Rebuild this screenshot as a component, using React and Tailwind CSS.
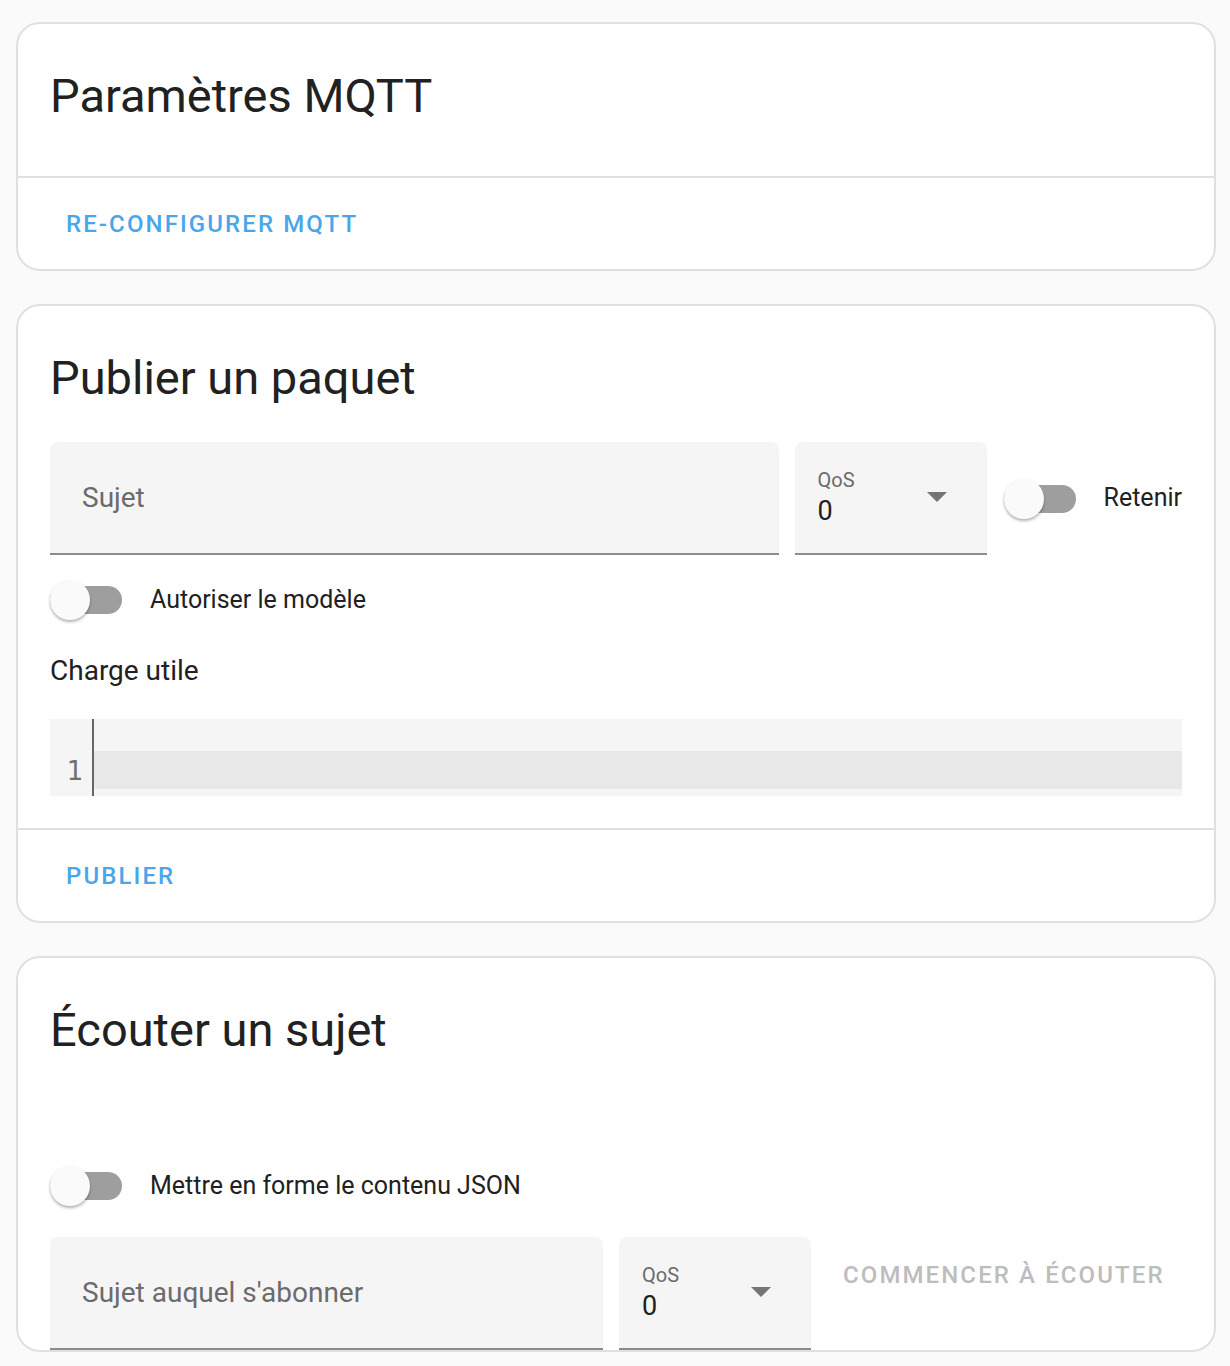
import React from "react";

function Toggle() {
  return (
    <div className="relative w-[72px] h-[40px] flex items-center shrink-0">
      <div className="w-[72px] h-[28px] rounded-full bg-[#9e9e9e]" />
      <div className="absolute left-0 top-0 w-[40px] h-[40px] rounded-full bg-[#fafafa] shadow-[0_2px_3px_rgba(0,0,0,0.3)]" />
    </div>
  );
}

function TextField({ label, className }) {
  return (
    <div className={`h-[113px] bg-[#f5f5f5] rounded-t-[8px] border-b-2 border-[#8c8c8c] flex items-center px-[32px] ${className}`}>
      <span className="text-[28px] text-[#6b6b6b]">{label}</span>
    </div>
  );
}

function QosSelect() {
  return (
    <div className="w-[192px] h-[113px] bg-[#f5f5f5] rounded-t-[8px] border-b-2 border-[#8c8c8c] flex items-center justify-between pl-[23px] pr-[40px] shrink-0">
      <div className="flex flex-col pt-[4px]">
        <span className="text-[20px] leading-[24px] text-[#6b6b6b] -mt-[3px]">QoS</span>
        <span className="text-[27px] leading-[34px] text-[#212121] mt-[2px]">0</span>
      </div>
      <svg width="20" height="10" viewBox="0 0 20 10" className="-mt-[2px]">
        <path d="M0 0 L20 0 L10 10 Z" fill="#757575" />
      </svg>
    </div>
  );
}

function Card({ children, className }) {
  return (
    <div className={`bg-white border-2 border-[#e0e0e0] rounded-[24px] ${className}`}>
      {children}
    </div>
  );
}

export default function App() {
  return (
    <div className="min-h-screen bg-[#fafafa] pt-[22px] pl-[16px] pr-[14px] font-['Roboto',sans-serif] text-[#212121]">
      <Card>
        <div className="h-[154px] flex items-center px-[32px] border-b-2 border-[#e0e0e0]">
          <h1 className="text-[47px] leading-[56px] text-[#212121] -mt-[8px]">Paramètres MQTT</h1>
        </div>
        <div className="h-[91px] flex items-center px-[48px]">
          <span className="text-[24px] font-medium tracking-[2.1px] text-[#4aa6ea]">RE-CONFIGURER MQTT</span>
        </div>
      </Card>

      <Card className="mt-[33px]">
        <div className="px-[32px] pt-[44px]">
          <h1 className="text-[47px] leading-[56px]">Publier un paquet</h1>
          <div className="flex items-center mt-[36px]">
            <TextField label="Sujet" className="flex-1" />
            <div className="ml-[16px]">
              <QosSelect />
            </div>
            <div className="ml-[17px]">
              <Toggle />
            </div>
            <span className="ml-[28px] text-[25px] text-[#212121] -mt-[2px]">Retenir</span>
          </div>
          <div className="flex items-center mt-[25px]">
            <Toggle />
            <span className="ml-[28px] text-[25px] text-[#212121]">Autoriser le modèle</span>
          </div>
          <div className="mt-[35px] text-[28px] leading-[32px]">Charge utile</div>
          <div className="mt-[32px] h-[77px] bg-[#f5f5f5] flex">
            <div className="w-[44px] border-r-2 border-[#666] flex items-end justify-center pb-[12px]">
              <span className="text-[26px] text-[#6f6f6f] font-['DejaVu_Sans',sans-serif] leading-none pl-[8px]">1</span>
            </div>
            <div className="flex-1 pt-[32px] pb-[7px]">
              <div className="h-full bg-[#e8e8e8]" />
            </div>
          </div>
        </div>
        <div className="mt-[32px] border-t-2 border-[#e0e0e0] h-[93px] flex items-center px-[48px]">
          <span className="text-[24px] font-medium tracking-[2.1px] text-[#4aa6ea]">PUBLIER</span>
        </div>
      </Card>

      <Card className="mt-[33px] h-[396px] overflow-hidden">
        <div className="px-[32px] pt-[44px]">
          <h1 className="text-[47px] leading-[56px]">Écouter un sujet</h1>
          <div className="flex items-center mt-[108px]">
            <Toggle />
            <span className="ml-[28px] text-[25px] text-[#212121]">Mettre en forme le contenu JSON</span>
          </div>
          <div className="flex items-start mt-[31px]">
            <TextField label="Sujet auquel s'abonner" className="w-[553px]" />
            <div className="ml-[16px]">
              <QosSelect />
            </div>
            <span className="ml-[32px] mt-[20px] text-[24px] font-medium tracking-[2.1px] text-[#bdbdbd]">COMMENCER À ÉCOUTER</span>
          </div>
        </div>
      </Card>
    </div>
  );
}
